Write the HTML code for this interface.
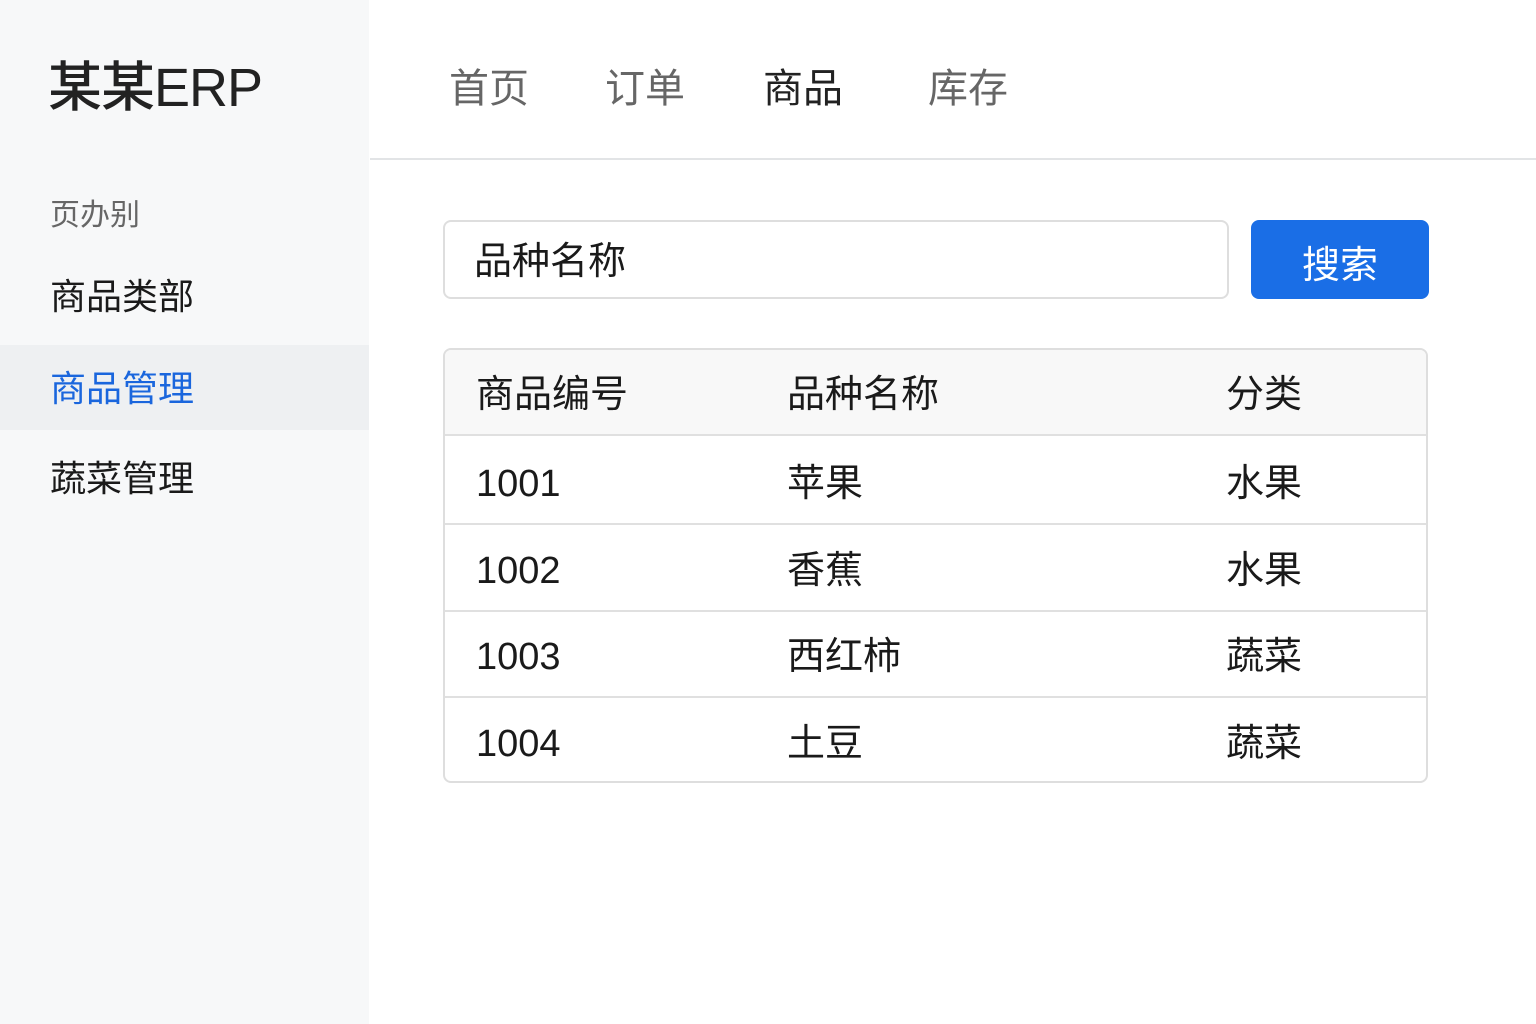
<!DOCTYPE html>
<html><head><meta charset="utf-8"><style>
*{margin:0;padding:0;box-sizing:border-box}
body{width:1536px;height:1024px;position:relative;background:#fff;font-family:"Liberation Sans","Noto Sans CJK SC",sans-serif;overflow:hidden}
.side{position:absolute;left:0;top:0;width:369px;height:1024px;background:#f7f8f9}
.t{position:absolute;white-space:nowrap;line-height:1}
.hdr{position:absolute;left:370px;top:0;width:1166px;height:160px;background:#fff;border-bottom:2px solid #e2e4e6}
.active{position:absolute;left:0;top:345px;width:369px;height:85px;background:#eef0f2}
.inp{position:absolute;left:443px;top:220px;width:786px;height:79px;border:2px solid #dedede;border-radius:8px}
.btn{position:absolute;left:1251px;top:220px;width:178px;height:79px;background:#1a6ee6;border-radius:8px;color:#fff;font-size:38px;display:flex;align-items:center;justify-content:center;padding-top:4px}
.tbl{position:absolute;left:443px;top:348px;width:985px;height:435px;border:2px solid #dedede;border-radius:8px;overflow:hidden}
.th{position:absolute;left:0;top:0;width:100%;height:86px;background:#f8f8f8;border-bottom:2px solid #e0e0e0}
.line{position:absolute;left:0;width:100%;height:2px;background:#e0e0e0}
.c{position:absolute;font-size:38px;color:#1a1a1a;line-height:1;white-space:nowrap}
</style></head><body>
<div class="side"></div>
<div class="active"></div>
<div class="t" style="left:48px;top:61px;font-size:54px;color:#222;font-weight:500;letter-spacing:-1px">某某ERP</div>
<div class="t" style="left:50px;top:201px;font-size:30px;color:#666">页办别</div>
<div class="t" style="left:50px;top:279px;font-size:36px;color:#1a1a1a">商品类部</div>
<div class="t" style="left:50px;top:371px;font-size:36px;color:#1a66dd">商品管理</div>
<div class="t" style="left:50px;top:461px;font-size:36px;color:#1a1a1a">蔬菜管理</div>
<div class="hdr"></div>
<div class="t" style="left:449px;top:69px;font-size:40px;color:#666">首页</div>
<div class="t" style="left:605px;top:69px;font-size:40px;color:#666">订单</div>
<div class="t" style="left:763px;top:69px;font-size:40px;color:#222">商品</div>
<div class="t" style="left:928px;top:69px;font-size:40px;color:#666">库存</div>
<div class="inp"></div>
<div class="t" style="left:474px;top:243px;font-size:38px;color:#1a1a1a">品种名称</div>
<div class="btn">搜索</div>
<div class="tbl">
<div class="th"></div>
<div class="line" style="top:173px"></div>
<div class="line" style="top:260px"></div>
<div class="line" style="top:346px"></div>
<div class="c" style="left:31px;top:26px">商品编号</div><div class="c" style="left:342px;top:26px">品种名称</div><div class="c" style="left:781px;top:26px">分类</div>
<div class="c" style="left:31px;top:115px">1001</div><div class="c" style="left:342px;top:115px">苹果</div><div class="c" style="left:781px;top:115px">水果</div>
<div class="c" style="left:31px;top:202px">1002</div><div class="c" style="left:342px;top:202px">香蕉</div><div class="c" style="left:781px;top:202px">水果</div>
<div class="c" style="left:31px;top:288px">1003</div><div class="c" style="left:342px;top:288px">西红柿</div><div class="c" style="left:781px;top:288px">蔬菜</div>
<div class="c" style="left:31px;top:375px">1004</div><div class="c" style="left:342px;top:375px">土豆</div><div class="c" style="left:781px;top:375px">蔬菜</div>
</div>
</body></html>
